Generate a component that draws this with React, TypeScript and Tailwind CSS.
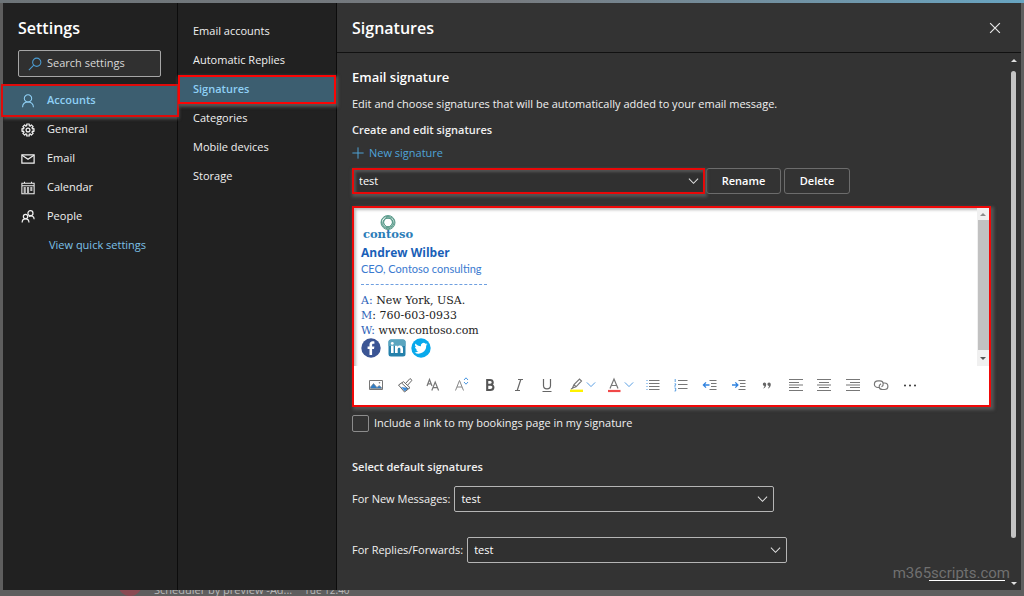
import React from "react";

type IconProps = { className?: string; children: React.ReactNode; size?: number };

function Icon({ className = "", children, size = 16 }: IconProps) {
  return (
    <svg
      viewBox="0 0 16 16"
      width={size}
      height={size}
      fill="none"
      stroke="currentColor"
      strokeWidth="1.2"
      aria-hidden="true"
      className={`shrink-0 ${className}`}
    >
      {children}
    </svg>
  );
}

function Chevron({ className = "" }: { className?: string }) {
  return (
    <svg viewBox="0 0 12 8" fill="none" stroke="currentColor" strokeWidth="1.1" aria-hidden="true" className={className}>
      <path d="M1 1.5 6 6.5 11 1.5" />
    </svg>
  );
}

const gearPath = Array.from({ length: 8 }, (_, i) => {
  const point = (deg: number, r: number) => {
    const a = ((deg + i * 45) * Math.PI) / 180;
    return `${(8 + r * Math.cos(a)).toFixed(2)} ${(8 + r * Math.sin(a)).toFixed(2)}`;
  };
  return `${i === 0 ? "M" : "L"}${point(-12, 7)} L${point(12, 7)} L${point(15, 5.2)} L${point(30, 5.2)}`;
}).join(" ");

const accountItems = [
  {
    label: "Accounts",
    active: true,
    icon: (
      <>
        <circle cx="8" cy="5" r="4.2" />
        <path d="M1.800 15c0-3.600 2.600-5.800 6.200-5.800s6.200 2.200 6.200 5.800" />
      </>
    ),
  },
  {
    label: "General",
    icon: (
      <>
        <path d={`${gearPath}Z`} strokeLinejoin="round" strokeWidth="1.400" />
        <circle cx="8" cy="8" r="2.200" strokeWidth="1.400" />
      </>
    ),
  },
  {
    label: "Email",
    icon: (
      <>
        <path d="M1 3.200h14v9.500H1z" strokeWidth="1.400" />
        <path d="m1.200 3.700 6.800 4.500L14.800 3.700" strokeWidth="1.400" />
      </>
    ),
  },
  {
    label: "Calendar",
    icon: (
      <>
        <path d="M1 2.500h14v12H1zM1 5.500h14M4 .8v2M12 .8v2" />
        <path d="M3 8h2.500M6.800 8h2.500M10.600 8H13M3 10.300h2.500M6.800 10.300h2.500M10.600 10.300H13M3 12.500h2.500M6.800 12.500h2.500" strokeWidth="1.600" />
      </>
    ),
  },
  {
    label: "People",
    icon: (
      <>
        <circle cx="10.800" cy="3.600" r="2.900" strokeWidth="1.400" />
        <circle cx="5.200" cy="7.500" r="2.500" strokeWidth="1.400" />
        <path d="M1.300 14.400c0-2.600 1.600-4.200 3.900-4.200s3.900 1.600 3.900 4.200M9 7.500c3.300-1.800 6-.2 6 3" strokeWidth="1.400" />
      </>
    ),
  },
];

const pages = ["Email accounts", "Automatic Replies", "Signatures", "Categories", "Mobile devices", "Storage"];

function SettingsSidebar() {
  return (
    <aside className="flex w-[175px] shrink-0 flex-col border-r border-[#0c0c0c] bg-[#212121]">
      <h1 className="mt-[14px] pl-[15px] text-[16px] leading-[22px] font-semibold text-white">Settings</h1>
      <label className="mt-[11px] mr-4 mb-[9px] ml-[15px] flex h-[27px] items-center gap-[5px] rounded-[2px] border border-[#a6a6a6] bg-[#303030] pl-[9px]">
        <Icon size={14} className="text-[#4b9bd0]">
          <circle cx="10" cy="6" r="4.700" />
          <path d="M6.600 9.400 1 15" />
        </Icon>
        <input
          type="search"
          aria-label="Search settings"
          placeholder="Search settings"
          className="w-full min-w-0 bg-transparent text-[11px] text-white outline-none placeholder:text-[#d8d8d8]"
        />
      </label>
      <nav aria-label="Settings" className="flex flex-col">
        {accountItems.map((item) => (
          <button
            key={item.label}
            type="button"
            className={
              item.active
                ? "relative z-10 flex h-[29px] items-center gap-3 bg-[#3c5e70] pl-[18px] text-[11px] font-semibold text-[#8fd0f5] shadow-[1px_3px_3px_1px_#555] outline-2 outline-[#e00b0b]"
                : "flex h-[29px] items-center gap-3 pl-[18px] text-[11px] text-[#f0f0f0]"
            }
          >
            <Icon size={14}>{item.icon}</Icon>
            {item.label}
          </button>
        ))}
      </nav>
      <a href="#quick" className="mt-[5px] pl-[46px] text-[11px] leading-[18px] text-[#7cc0e8]">
        View quick settings
      </a>
    </aside>
  );
}

function PageList() {
  return (
    <nav aria-label="Accounts" className="flex w-[159px] shrink-0 flex-col border-r border-[#0c0c0c] bg-[#212121] pt-[14px]">
      {pages.map((page) => (
        <button
          key={page}
          type="button"
          className={
            page === "Signatures"
              ? "relative z-10 flex h-[29px] items-center bg-[#3c5e70] pl-[15px] text-[11px] font-semibold text-[#8fd0f5] shadow-[1px_2px_3px_1px_#555] outline-2 -outline-offset-2 outline-[#fb0505]"
              : "flex h-[29px] items-center pl-[15px] text-[11px] text-[#f0f0f0]"
          }
        >
          {page}
        </button>
      ))}
    </nav>
  );
}

function SignatureSelect({ id, label, marked = false }: { id: string; label?: string; marked?: boolean }) {
  return (
    <div className={marked ? "relative w-[353px] shadow-[1px_2px_3px_1px_#555]" : "relative w-[320px]"}>
      <select
        id={id}
        aria-label={label}
        defaultValue="test"
        className={
          marked
            ? "block h-[26px] w-full appearance-none border-2 border-[#e80808] bg-[#303030] pl-[5px] text-[11px] text-white shadow-[inset_2px_2px_3px_#555] outline-none"
            : "block h-[26px] w-full appearance-none rounded-[2px] border border-[#b5b5b5] bg-[#303030] pl-[6px] text-[11px] text-white outline-none"
        }
      >
        <option value="test">test</option>
      </select>
      <Chevron className="pointer-events-none absolute top-[9px] right-[6px] h-[8px] w-[11px] text-[#e0e0e0]" />
    </div>
  );
}

function Logo() {
  return (
    <svg viewBox="0 0 54 27" width="54" height="27" role="img" aria-label="contoso">
      <g fill="none" stroke="#5b9c8c" strokeWidth="1">
        <circle cx="27" cy="7.500" r="7" />
        <circle cx="26" cy="7" r="5.500" />
        <circle cx="28" cy="7" r="5.300" />
        <circle cx="27" cy="8.500" r="5.300" />
        <circle cx="27" cy="7.300" r="4.400" />
      </g>
      <circle cx="27" cy="7.300" r="3.400" fill="#ffffff" />
      <text x="27" y="23" textAnchor="middle" fill="#2c7db8" fontFamily="DejaVu Serif, serif" fontSize="11.500" fontWeight="700">
        contoso
      </text>
    </svg>
  );
}

function SocialLinks() {
  return (
    <div className="flex items-center gap-[6px]">
      <a href="#facebook" aria-label="Facebook">
        <svg viewBox="0 0 20 20" width="20" height="20" aria-hidden="true">
          <circle cx="10" cy="10" r="9.700" fill="#3b5594" />
          <path d="M8.500 17v-6H6.600V8.400h1.900V6.800c0-2.300 1.200-3.500 3.300-3.500.7 0 1.300.1 1.600.1v2.300h-1.200c-.8 0-1.100.5-1.100 1.200v1.500h2.300l-.4 2.600h-1.900v6z" fill="#fff" />
        </svg>
      </a>
      <a href="#linkedin" aria-label="LinkedIn">
        <svg viewBox="0 0 20 20" width="20" height="20" aria-hidden="true">
          <rect x="1.500" y="1.500" width="17" height="17" rx="2.500" fill="#2581ab" />
          <path d="M1.500 4A2.500 2.500 0 0 1 4 1.500h12A2.500 2.500 0 0 1 18.500 4v4h-17z" fill="#5aa5bf" />
          <circle cx="5.300" cy="5.400" r="1.400" fill="#fff" />
          <path d="M4 7.800h2.600V15H4zM8 7.800h2.500v1c.5-.8 1.400-1.200 2.500-1.200 2.100 0 3 1.300 3 3.300V15h-2.600v-3.700c0-1-.4-1.600-1.200-1.600-1 0-1.500.7-1.500 1.700V15H8z" fill="#fff" />
        </svg>
      </a>
      <a href="#twitter" aria-label="Twitter" className="-ml-[2px]">
        <svg viewBox="0 0 20 20" width="20" height="20" aria-hidden="true">
          <circle cx="10" cy="10" r="9.700" fill="#08a9ec" />
          <path d="M16.500 6.200c-.5.200-1 .4-1.500.4.500-.3 1-.8 1.200-1.400-.5.300-1.100.5-1.700.6a2.700 2.700 0 0 0-4.600 2.500c-2.200-.1-4.200-1.200-5.500-2.800-.7 1.200-.4 2.800.8 3.600-.4 0-.8-.1-1.200-.3 0 1.300.9 2.400 2.200 2.600-.4.100-.8.100-1.200 0 .3 1.100 1.300 1.900 2.500 1.900A5.400 5.400 0 0 1 3.500 14.400a7.600 7.600 0 0 0 11.700-6.800c.5-.4 1-.8 1.300-1.400z" fill="#fff" />
        </svg>
      </a>
    </div>
  );
}

const lines = (d: string) => <path d={d} stroke="#777" strokeWidth="1.100" />;

const tools: { name: string; menu?: boolean; icon: React.ReactNode }[] = [
  {
    name: "Insert picture",
    icon: (
      <>
        <path d="M1.500 3.500h13v9h-13z" stroke="#777" strokeWidth="1" />
        <path d="M2.500 11.500V10l3-3.500 3.500 4L11 8.500l2.500 2v1z" fill="#2f7cc4" stroke="#888" strokeWidth=".7" />
        <circle cx="11.500" cy="5.800" r=".8" fill="#777" stroke="none" />
      </>
    ),
  },
  {
    name: "Format painter",
    icon: (
      <>
        <path d="m4 10 3.800 4.300 4.200-3.300z" fill="#3a8bdc" stroke="none" />
        <path d="m1.500 8 5-3.300 6.500 6-5.500 4.300zM4.800 6.200 11 12M8.700 6.300l4.300-4.800 2 1.800-4.300 4.800" stroke="#666" strokeWidth="1" />
      </>
    ),
  },
  {
    name: "Font",
    icon: <path d="m2 9 2.500-6.500L7 9M3 6.800h3M6.800 13.500 10.200 5l3.400 8.500M8 10.600h4.500" stroke="#777" />,
  },
  {
    name: "Font size",
    icon: (
      <>
        <path d="m1.500 13.500 4-10 4 10M3 10h5" stroke="#888" strokeWidth="1" />
        <path d="m10 3 2-2.200L14 3M10 5l2 2.200L14 5" stroke="#4a96e0" strokeWidth="1" />
      </>
    ),
  },
  {
    name: "Bold",
    icon: <path d="M5.200 3v10h3c4.200 0 4.200-5.200.5-5.200H5.200h3C11.600 7.800 11.600 3 8 3z" stroke="#555" strokeWidth="2.100" />,
  },
  { name: "Italic", icon: <path d="M7 2.500h5M4 13.500h5M9.800 2.500l-3.600 11" stroke="#666" /> },
  { name: "Underline", icon: <path d="M4.500 2v6.500c0 4.500 7 4.500 7 0V2M3.500 14.500h9" stroke="#666" /> },
  {
    name: "Highlight",
    menu: true,
    icon: (
      <>
        <path d="M2 13.800h13" stroke="#fff200" strokeWidth="2.400" />
        <path d="m4.500 11 1.500-3.500 5.500-5.500 2 2L8 9.800zM6 7.800 8 9.600M3 12l2-1" stroke="#777" />
      </>
    ),
  },
  {
    name: "Font color",
    menu: true,
    icon: (
      <>
        <path d="M2 14h12.500" stroke="#f04848" strokeWidth="2.200" />
        <path d="m4 11.500 4-9.500 4 9.500M5.300 8.500h5.400" stroke="#777" />
      </>
    ),
  },
  {
    name: "Bulleted list",
    icon: (
      <>
        {lines("M4 3.500h10.500M4 6.500h10.500M4 9.500h10.500M4 12.500h10.500")}
        <path d="M1.500 3.500h1M1.500 6.500h1M1.500 9.500h1M1.500 12.500h1" stroke="#4a96e0" />
      </>
    ),
  },
  {
    name: "Numbered list",
    icon: (
      <>
        {lines("M5 3.500h9.500M5 7.500h9.500M5 11.500h9.500")}
        <path d="M2.200 2v3M1.500 6.800h1.200v1.200l-1.200 1h1.300M1.500 11h1.200v3H1.500" stroke="#4a96e0" strokeWidth=".9" />
      </>
    ),
  },
  {
    name: "Decrease indent",
    icon: (
      <>
        {lines("M7.500 3.500h7M9 6.500h5.500M9 9.500h5.500M7.500 12.500h7")}
        <path d="M7.500 8H1.500M4 5.400 1.400 8 4 10.600" stroke="#2f82e0" strokeWidth="1.300" />
      </>
    ),
  },
  {
    name: "Increase indent",
    icon: (
      <>
        {lines("M7.500 3.500h7M9 6.500h5.500M9 9.500h5.500M7.500 12.500h7")}
        <path d="M1 8h6M4.300 5.400 6.900 8l-2.600 2.600" stroke="#2f82e0" strokeWidth="1.300" />
      </>
    ),
  },
  {
    name: "Quote",
    icon: (
      <path d="M7.200 7.200a1.700 1.700 0 1 0-1.700 1.800c-.1 1-.6 1.800-1.400 2.500 2-.6 3.200-2.300 3.100-4.300zM11.800 7.200a1.700 1.700 0 1 0-1.700 1.800c-.1 1-.6 1.800-1.400 2.500 2-.6 3.200-2.300 3.100-4.300z" fill="#666" stroke="none" />
    ),
  },
  { name: "Align left", icon: lines("M1 2.500h14M1 5.500h10M1 8h14M1 10.500h10M1 13.500h14") },
  { name: "Align center", icon: lines("M1 2.500h14M3 5.500h10M1 8h14M3 10.500h10M1 13.500h14") },
  { name: "Align right", icon: lines("M1 2.500h14M5 5.500h10M1 8h14M5 10.500h10M1 13.500h14") },
  {
    name: "Insert link",
    icon: (
      <path d="M6.500 10.500H5C.2 10.500.2 3.800 5 3.800h2c4 0 4 4.700 1.500 6M9.500 6h2c4.500 0 4.500 6.500 0 6.500h-2c-4.200 0-4.200-4.300-1.500-5.800" stroke="#777" />
    ),
  },
  {
    name: "More options",
    icon: (
      <g fill="#333" stroke="none">
        <circle cx="3" cy="8.400" r="1" />
        <circle cx="8" cy="8.400" r="1" />
        <circle cx="13" cy="8.400" r="1" />
      </g>
    ),
  },
];

function SignatureEditor() {
  return (
    <section
      aria-label="Signature editor"
      className="mt-3 mr-[15px] flex h-[201px] flex-col border-2 border-[#f00808] bg-white text-[#222] shadow-[2px_2px_3px_1px_#555]"
    >
      <div className="flex h-[158px] shadow-[inset_3px_3px_3px_-1px_#bbb]">
        <div className="flex flex-1 flex-col items-start pt-[7px] pl-[7px]">
          <Logo />
          <strong className="mt-[2px] text-[12px] leading-[17px] text-[#1a5fb8]">Andrew Wilber</strong>
          <span className="font-['Lato',sans-serif] text-[11px] leading-[15px] text-[#3a7ad0]">CEO, Contoso consulting</span>
          <div className="my-2 w-[126px] border-t border-dashed border-[#6e9fe0]" />
          <div className="font-['DejaVu_Serif',serif] text-[11px] leading-[15px]">
            <p><span className="text-[#2f64b8]">A:</span> New York, USA.</p>
            <p><span className="text-[#2f64b8]">M</span>: 760-603-0933</p>
            <p><span className="text-[#2f64b8]">W:</span> www.contoso.com</p>
          </div>
          <SocialLinks />
        </div>
        <div className="flex w-[12px] flex-col items-center bg-[#f0f0f0]" aria-hidden="true">
          <svg viewBox="0 0 12 12" width="12" height="12"><path d="M3 8h6L6 5z" fill="#8c8c8c" /></svg>
          <div className="w-[11px] flex-1 bg-[#c1c1c1]" />
          <svg viewBox="0 0 12 16" width="12" height="16"><path d="M3 7h6l-3 3z" fill="#555" /></svg>
        </div>
      </div>
      <div role="toolbar" aria-label="Formatting" className="ml-[14px] flex w-[550px] flex-1 items-center justify-between pb-[2px]">
        {tools.map((tool) => (
          <button
            key={tool.name}
            type="button"
            aria-label={tool.name}
            className={tool.menu ? "flex w-[26px] items-center gap-[2px]" : "flex w-4 items-center"}
          >
            <Icon>{tool.icon}</Icon>
            {tool.menu && <Chevron className="h-[7px] w-[10px] shrink-0 text-[#4a96e0]" />}
          </button>
        ))}
      </div>
    </section>
  );
}

function Scrollbar() {
  return (
    <div className="flex w-[15px] shrink-0 flex-col items-center" aria-hidden="true">
      <svg viewBox="0 0 8 18" width="8" height="18"><path d="M1 9h6L4 6z" fill="#e0e0e0" /></svg>
      <div className="w-[5px] flex-1 rounded-full bg-[#c4c4c4]" />
      <svg viewBox="0 0 8 52" width="8" height="52"><path d="M1 44h6l-3 3z" fill="#e0e0e0" /></svg>
    </div>
  );
}

function SignaturesPanel() {
  return (
    <main className="relative flex min-w-0 flex-1 flex-col bg-[#333333]">
      <header className="flex h-[50px] items-center justify-between border-b border-[#111] pr-5 pl-[15px]">
        <h2 className="text-[16px] leading-[22px] font-semibold text-white">Signatures</h2>
        <button type="button" aria-label="Close" className="text-[#e8e8e8]">
          <Icon size={12}>
            <path d="m1.500 1.500 13 13M14.500 1.500l-13 13" strokeWidth="1.600" />
          </Icon>
        </button>
      </header>
      <div className="flex flex-1">
        <div className="flex-1 pt-[14px] pl-[15px] text-[11px] text-[#f0f0f0]">
          <h3 className="text-[13px] leading-5 font-semibold text-white">Email signature</h3>
          <p className="mt-2 leading-[18px]">
            Edit and choose signatures that will be automatically added to your email message.
          </p>
          <h4 className="mt-2 leading-[18px] font-semibold">Create and edit signatures</h4>
          <button type="button" className="mt-[5px] flex h-[18px] items-center gap-[5px] text-[#4fa3d8]">
            <Icon size={12}>
              <path d="M8 .5v15M.5 8h15" strokeWidth="1.300" />
            </Icon>
            New signature
          </button>
          <div className="mt-[6px] flex">
            <SignatureSelect id="signature" label="Signature" marked />
            <button type="button" className="ml-px h-[26px] w-[75px] rounded-[3px] border border-[#6c6c6c] font-semibold text-white">
              Rename
            </button>
            <button type="button" className="ml-[3px] h-[26px] w-[66px] rounded-[3px] border border-[#6c6c6c] font-semibold text-white">
              Delete
            </button>
          </div>
          <SignatureEditor />
          <label className="mt-[7px] flex h-[18px] items-center gap-[5px]">
            <input type="checkbox" className="size-[17px] appearance-none rounded-[2px] border border-[#8c8c8c]" />
            Include a link to my bookings page in my signature
          </label>
          <h4 className="mt-[26px] leading-[18px] font-semibold">Select default signatures</h4>
          <div className="mt-[10px] flex items-center gap-1">
            <label htmlFor="new-messages">For New Messages:</label>
            <SignatureSelect id="new-messages" />
          </div>
          <div className="mt-[25px] flex items-center gap-1">
            <label htmlFor="replies">For Replies/Forwards:</label>
            <SignatureSelect id="replies" />
          </div>
        </div>
        <Scrollbar />
      </div>
      <div className="absolute right-[11px] bottom-[7px] font-[Roboto,sans-serif] text-[15px] leading-5 text-[#707070]">
        m365scripts.com
        <div className="absolute right-[5px] bottom-[2px] h-px w-[76px] bg-white" />
      </div>
    </main>
  );
}

export default function App() {
  return (
    <div className="flex min-h-screen flex-col bg-[#5e5e5e] font-['Open_Sans','Noto_Sans',sans-serif]">
      <div className="h-[3px] bg-linear-to-r from-[#6d7478] via-[#777b80] to-[#68a5c2]" />
      <div className="flex flex-1 px-[3px]">
        <SettingsSidebar />
        <PageList />
        <SignaturesPanel />
      </div>
      <div className="flex h-[6px] items-end gap-3 overflow-hidden pl-[118px] text-[11px] leading-[12px] text-[#b8b8b8]">
        <span className="h-[30px] w-[24px] shrink-0 rounded-full bg-[#8a4a52]" />
        <span>Scheduler by preview -Ad...</span>
        <span className="text-[10px]">Tue 12:40</span>
      </div>
    </div>
  );
}
